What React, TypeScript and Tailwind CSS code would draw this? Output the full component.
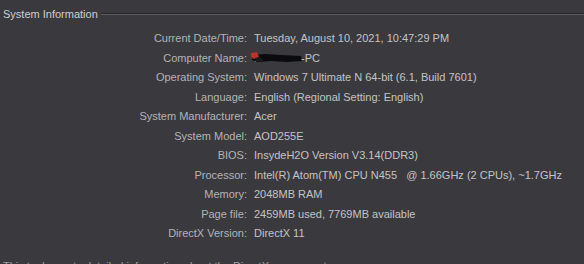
import React from 'react'

const rows: [string, React.ReactNode][] = [
  ['Current Date/Time:', 'Tuesday, August 10, 2021, 10:47:29 PM'],
  ['Computer Name:', null],
  ['Operating System:', 'Windows 7 Ultimate N 64-bit (6.1, Build 7601)'],
  ['Language:', 'English (Regional Setting: English)'],
  ['System Manufacturer:', 'Acer'],
  ['System Model:', 'AOD255E'],
  ['BIOS:', 'InsydeH2O Version V3.14(DDR3)'],
  ['Processor:', 'Intel(R) Atom(TM) CPU N455   @ 1.66GHz (2 CPUs), ~1.7GHz'],
  ['Memory:', '2048MB RAM'],
  ['Page file:', '2459MB used, 7769MB available'],
  ['DirectX Version:', 'DirectX 11'],
]

const ComputerName = () => (
  <span className='relative inline-flex items-center'>
    <span>t</span>
    <svg width='52' height='12' viewBox='0 0 52 12' className='-ml-[6px] mr-[1px]'>
      <path d='M2 3 L14 2 L30 3 L50 4 L51 9 L36 10 L20 9 L6 10 L1 8 Z' fill='#0b0b0d' />
      <path d='M0 1 L6 0 L8 5 L3 7 L0 5 Z' fill='#c0302a' />
      <path d='M4 6 L10 5 L12 9 L5 10 Z' fill='#1a1a1c' />
    </svg>
    <span className='-ml-[3px]'>-PC</span>
  </span>
)

const App = () => {
  return (
    <div
      className='w-[584px] h-[264px] overflow-hidden bg-[#3a393e] text-[#c4c4c6] text-[11px] relative'
      style={{ fontFamily: 'Tahoma, "Liberation Sans", Arial, sans-serif' }}
    >
      {/* group header */}
      <div className='flex items-center pt-[6px] pl-[3px]'>
        <span className='leading-[16px] text-[#cfcfd1]'>System Information</span>
        <div className='flex-1 ml-[3px] -mt-[1px] flex flex-col'>
          <div className='h-px bg-[#252428]' />
          <div className='h-px bg-[#5c5b60]' />
        </div>
      </div>

      <div className='grid grid-cols-[247px_1fr] gap-x-[7px] mt-[7px] leading-[19.5px]'>
        {rows.map(([label, value]) => (
          <React.Fragment key={label}>
            <div className='text-right text-[#b4b4b6]'>{label}</div>
            <div className='whitespace-pre'>{value ?? <ComputerName />}</div>
          </React.Fragment>
        ))}
      </div>

      {/* next block, cut off at the bottom */}
      <div className='absolute left-[3px] top-[258px] text-[#a0a0a2] whitespace-pre'>
        This tool reports detailed information about the DirectX components
      </div>
    </div>
  )
}

export default App
